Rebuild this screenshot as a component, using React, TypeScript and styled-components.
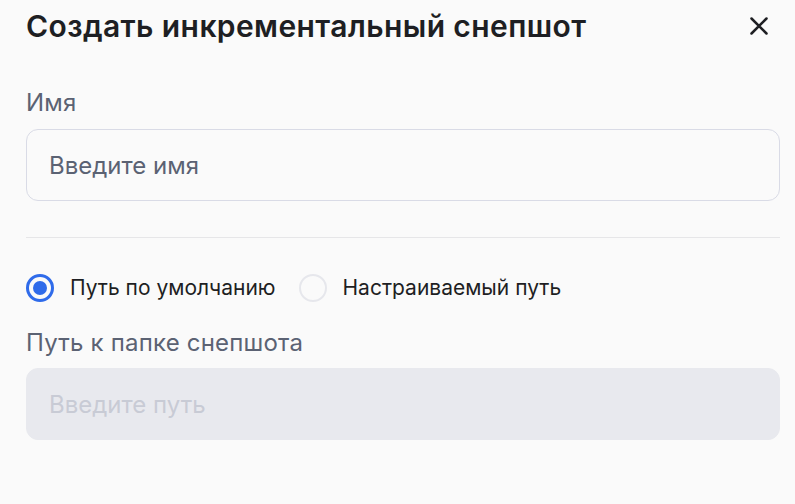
import {FC, useState} from 'react'
import styled, {createGlobalStyle} from 'styled-components'

const GlobalStyle = createGlobalStyle`
  html, body {
    margin: 0;
    padding: 0;
    background: #fafafa;
  }
  body {
    font-family: Inter, "Noto Sans", "Liberation Sans", sans-serif;
    color: #1f2024;
  }
`

const Dialog = styled.div`
  width: 795px;
  height: 504px;
  box-sizing: border-box;
  padding: 0 24px 0 26px;
  background: #fafafa;
`

const Header = styled.div`
  display: flex;
  align-items: center;
  justify-content: space-between;
  height: 52px;
`

const Title = styled.h1`
  margin: 0;
  font-size: 30px;
  line-height: 52px;
  font-weight: 600;
  letter-spacing: 0.4px;
  color: #1e1f23;
`

const CloseButton = styled.button`
  display: flex;
  align-items: center;
  justify-content: center;
  width: 24px;
  height: 24px;
  padding: 0;
  border: none;
  background: transparent;
  color: #1e1f23;
  cursor: pointer;
`

const Field = styled.div`
  display: flex;
  flex-direction: column;
  gap: 11px;
`

const NameField = styled(Field)`
  margin-top: 36px;
`

const PathField = styled(Field)`
  margin-top: 26px;
  gap: 10px;
`

const Label = styled.label`
  font-size: 24px;
  line-height: 30px;
  letter-spacing: 0.2px;
  color: #5b6273;
`

const Input = styled.input<{$muted?: boolean}>`
  box-sizing: border-box;
  width: 754px;
  height: 72px;
  padding: 0 22px;
  border-radius: 12px;
  border: 1px solid ${p => (p.$muted ? '#e8e9ee' : '#d9dbe6')};
  background: ${p => (p.$muted ? '#e8e9ee' : '#fafafa')};
  font-family: inherit;
  font-size: 24px;
  color: #1e1f23;
  outline: none;

  &::placeholder {
    color: ${p => (p.$muted ? '#c8cbd5' : '#5b6273')};
  }
`

const Divider = styled.hr`
  width: 754px;
  margin: 36px 0 0;
  border: none;
  border-top: 1px solid #e6e6e8;
`

const RadioGroup = styled.div`
  display: flex;
  align-items: center;
  gap: 23px;
  margin-top: 36px;
  height: 28px;
`

const RadioOption = styled.label`
  display: flex;
  align-items: center;
  gap: 16px;
  font-size: 21px;
  line-height: 28px;
  color: #1e1f23;
  cursor: pointer;
`

const RadioCircle = styled.span<{$checked: boolean}>`
  box-sizing: border-box;
  width: 28px;
  height: 28px;
  border-radius: 50%;
  border: ${p => (p.$checked ? '3px solid #2f6bea' : '2px solid #e6e7ec')};
  display: flex;
  align-items: center;
  justify-content: center;
  background: #fafafa;

  &::after {
    content: '';
    width: 14px;
    height: 14px;
    border-radius: 50%;
    background: ${p => (p.$checked ? '#2f6bea' : 'transparent')};
  }
`

const CloseIcon: FC = () => (
  <svg width="18" height="18" viewBox="0 0 18 18" fill="none">
    <path d="M1.5 1.5L16.5 16.5M16.5 1.5L1.5 16.5" stroke="currentColor" strokeWidth="2.5" strokeLinecap="round" />
  </svg>
)

const App: FC = () => {
  const [mode, setMode] = useState<'default' | 'custom'>('default')

  return (
    <Dialog>
      <GlobalStyle />
      <Header>
        <Title>Создать инкрементальный снепшот</Title>
        <CloseButton aria-label="Закрыть">
          <CloseIcon />
        </CloseButton>
      </Header>

      <NameField>
        <Label>Имя</Label>
        <Input placeholder="Введите имя" />
      </NameField>

      <Divider />

      <RadioGroup>
        <RadioOption onClick={() => setMode('default')}>
          <RadioCircle $checked={mode === 'default'} />
          Путь по умолчанию
        </RadioOption>
        <RadioOption onClick={() => setMode('custom')}>
          <RadioCircle $checked={mode === 'custom'} />
          Настраиваемый путь
        </RadioOption>
      </RadioGroup>

      <PathField>
        <Label>Путь к папке снепшота</Label>
        <Input $muted placeholder="Введите путь" disabled={mode === 'default'} />
      </PathField>
    </Dialog>
  )
}

export default App
